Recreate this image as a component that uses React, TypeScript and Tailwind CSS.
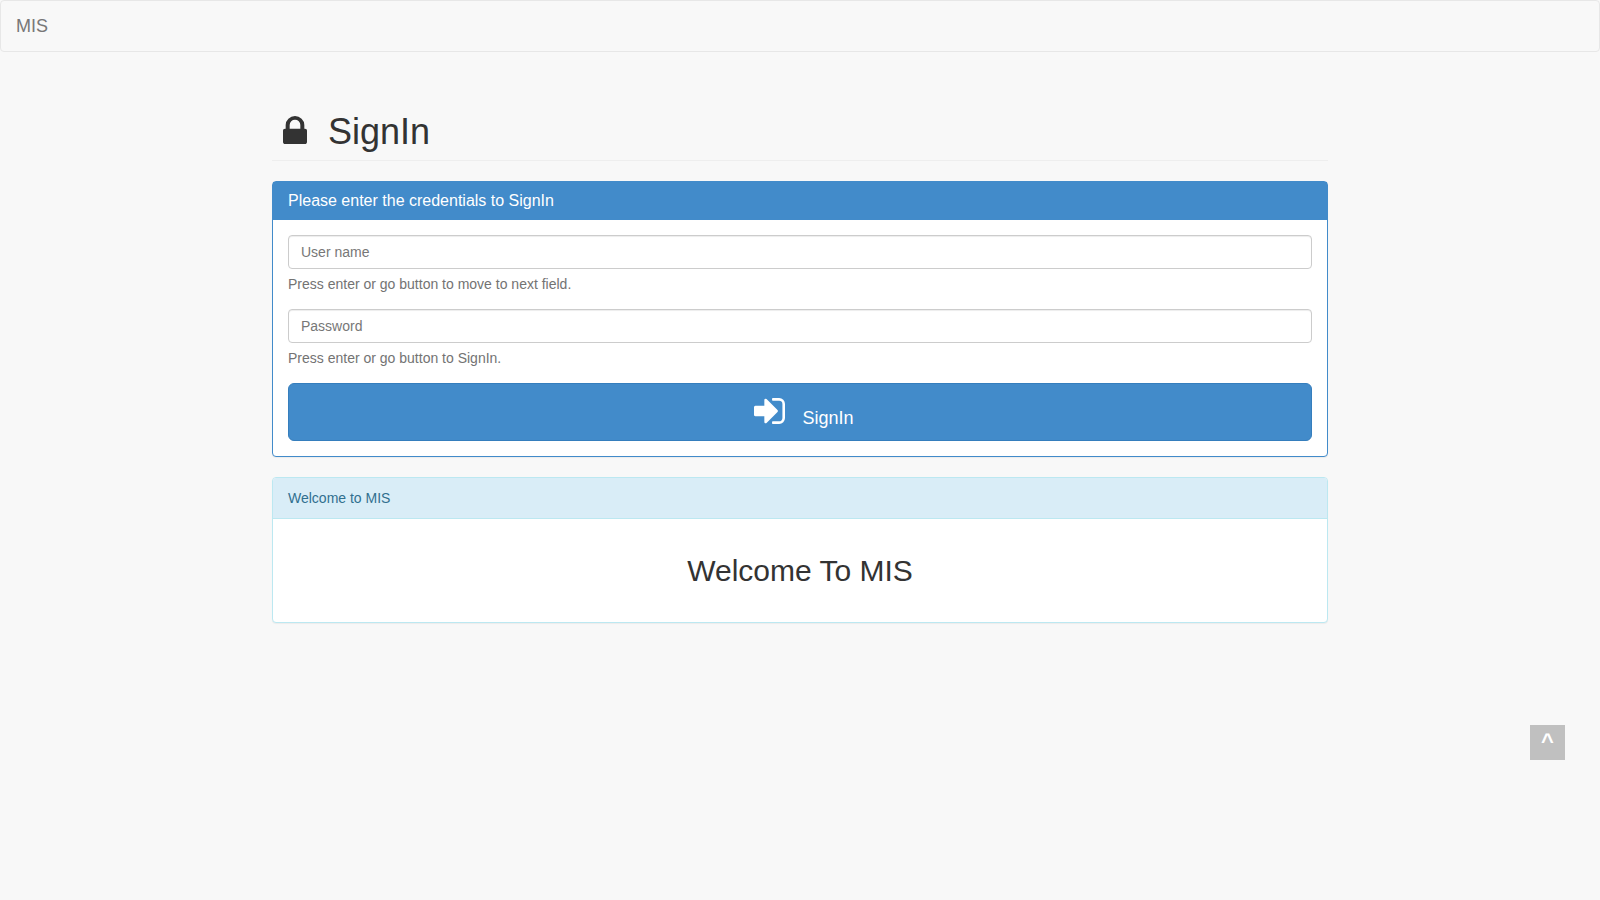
import React from 'react';

function LockIcon() {
  return (
    <svg viewBox="320 128 1152 1408" className="h-7 w-6" fill="currentColor" preserveAspectRatio="none" aria-hidden="true">
      <path d="M640 768h512v-192q0-106-75-181t-181-75-181 75-75 181v192zm832 96v576q0 40-28 68t-68 28h-960q-40 0-68-28t-28-68v-576q0-40 28-68t68-28h32v-192q0-184 132-316t316-132 316 132 132 316v192h32q40 0 68 28t28 68z" />
    </svg>
  );
}

function SignInIcon() {
  return (
    <svg viewBox="128 256 1536 1280" className="h-[26px] w-[31px]" fill="currentColor" aria-hidden="true">
      <path d="M1312 896q0 26-19 45l-544 544q-19 19-45 19t-45-19-19-45v-288h-448q-26 0-45-19t-19-45v-384q0-26 19-45t45-19h448v-288q0-26 19-45t45-19 45 19l544 544q19 19 19 45zm352-352v704q0 119-84.5 203.5t-203.5 84.5h-320q-13 0-22.5-9.5t-9.5-22.5q0-4-1-20t-.5-26.5 3-23.5 10-19.5 20.5-6.5h320q66 0 113-47t47-113v-704q0-66-47-113t-113-47h-312l-11.5-1-11.5-3-8-5.5-7-9-2-13.5q0-4-1-20t-.5-26.5 3-23.5 10-19.5 20.5-6.5h320q119 0 203.5 84.5t84.5 203.5z" />
    </svg>
  );
}

type FieldProps = { id: string; type: string; label: string; help: string };

function Field({ id, type, label, help }: FieldProps) {
  return (
    <div className="mb-[15px]">
      <input
        id={id}
        type={type}
        placeholder={label}
        aria-label={label}
        aria-describedby={`${id}-help`}
        className="block h-[34px] w-full rounded border border-[#ccc] bg-white px-3 py-1.5 text-sm text-[#555] shadow-[inset_0_1px_1px_rgba(0,0,0,0.075)] placeholder:text-[#777] focus:border-[#66afe9] focus:outline-none"
      />
      <p id={`${id}-help`} className="mt-[5px] leading-5 text-[#737373]">{help}</p>
    </div>
  );
}

export default function App() {
  return (
    <div className="min-h-screen bg-[#f8f8f8] font-['Liberation_Sans',Arial,sans-serif] text-sm text-[#333]">
      <nav className="flex h-[52px] items-center rounded border border-[#e7e7e7] bg-[#f8f8f8] px-[15px]">
        <a href="#" className="text-lg leading-5 text-[#777]">MIS</a>
      </nav>

      <main className="mx-auto w-[66%] pt-[60px]">
        <header className="mb-5 flex items-baseline gap-[21px] border-b border-[#eee] pb-2 pl-[11px]">
          <LockIcon />
          <h1 className="text-4xl leading-10">SignIn</h1>
        </header>

        <section className="mb-5 rounded border border-[#428bca] bg-white shadow-[0_1px_1px_rgba(0,0,0,0.05)]">
          <h2 className="bg-[#428bca] px-[15px] py-[9px] text-base leading-5 text-white">
            Please enter the credentials to SignIn
          </h2>
          <form className="p-[15px]" onSubmit={(e) => e.preventDefault()}>
            <Field id="username" type="text" label="User name" help="Press enter or go button to move to next field." />
            <Field id="password" type="password" label="Password" help="Press enter or go button to SignIn." />
            <button
              type="submit"
              className="flex h-[58px] w-full items-baseline justify-center gap-[17px] rounded-md border border-[#357ebd] bg-[#428bca] pt-3.5 pl-2 text-lg leading-6 text-white"
            >
              <SignInIcon />
              <span>SignIn</span>
            </button>
          </form>
        </section>

        <section className="rounded border border-[#bce8f1] bg-white shadow-[0_1px_1px_rgba(0,0,0,0.05)]">
          <div className="rounded-t-[3px] border-b border-[#bce8f1] bg-[#d9edf7] px-[15px] py-2.5 leading-5 text-[#31708f]">
            Welcome to MIS
          </div>
          <h2 className="px-[15px] pt-[35px] pb-[34px] text-center text-3xl leading-[34px]">Welcome To MIS</h2>
        </section>
      </main>

      <button
        type="button"
        aria-label="Back to top"
        className="fixed right-[35px] bottom-[140px] flex size-[35px] items-center justify-center bg-[#c0c0c0] pb-0.5 text-[22px] leading-none font-bold text-white"
      >
        ^
      </button>
    </div>
  );
}
